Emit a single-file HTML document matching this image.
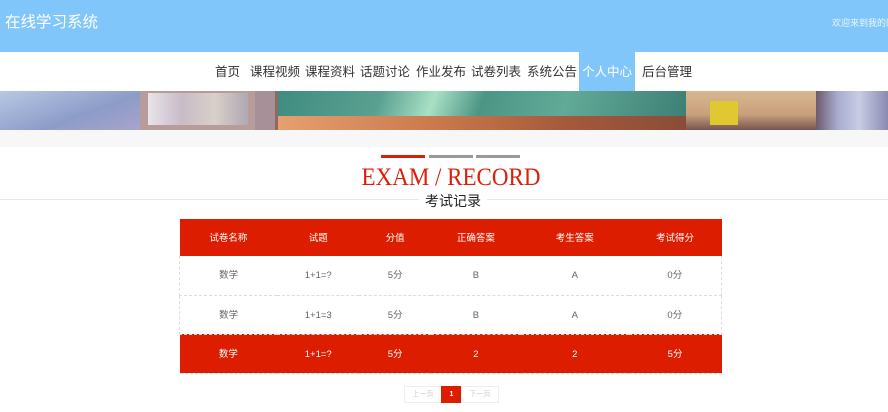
<!DOCTYPE html>
<html><head><meta charset="utf-8">
<style>
*{margin:0;padding:0;box-sizing:border-box}
body{width:888px;height:412px;overflow:hidden;background:#fff;font-family:"Liberation Sans","Noto Sans CJK SC",sans-serif;position:relative}
.hdr{position:absolute;left:0;top:0;width:888px;height:52px;background:#80c6fa}
.logo{position:absolute;left:5px;top:13px;color:#fff;font-size:15.5px;line-height:20px}
.wel{position:absolute;left:832px;top:16px;color:#eaf4ff;font-size:9px;white-space:nowrap}
.nav{position:absolute;left:0;top:52px;width:888px;height:39px;background:#fff}
.nav span{position:absolute;top:0;height:39px;line-height:40px;font-size:12.5px;color:#333;white-space:nowrap}
.nav .act{background:#80c6fa;color:#fff;width:56px;text-align:center}
.ban{position:absolute;left:0;top:91px;width:888px;height:39px;overflow:hidden;background:#8d6a5c}
.ban div{position:absolute}
.gray{position:absolute;left:0;top:130px;width:888px;height:17px;background:#f7f7f7}
.bar{position:absolute;top:155px;height:3px;width:44px}
.t1{position:absolute;left:7px;width:888px;top:163px;line-height:28px;text-align:center;font-family:"Liberation Serif",serif;font-size:23px;color:#d9200a;transform:scaleY(1.12)}
.line{position:absolute;left:0;top:199px;width:888px;height:1px;background:#e8e8e8}
.t2{position:absolute;left:419px;top:191px;padding:0 6px;background:#fff;font-size:14px;color:#222}
table{position:absolute;left:179px;top:219px;width:543px;border-collapse:collapse;font-size:9.5px;text-align:center}
td{height:39px;line-height:14px;vertical-align:middle;color:#666;border-bottom:1px dashed #ddd;padding:2px 0 0 0}
tr.h td{background:#dd1d00;color:#fff;height:37px;border:none}
tr.r td{background:#dd1d00;color:#fff;border-top:1px dashed #eaa}
tr.w td:first-child{border-left:1px dashed #ddd}
tr.w td:last-child{border-right:1px dashed #ddd}
.pg{position:absolute;top:386px;height:17px;font-size:7px;line-height:15px;text-align:center;border:1px solid #eee;color:#ccc}
</style></head><body>
<div class="hdr"><div class="logo">在线学习系统</div><div class="wel">欢迎来到我的网站</div></div>
<div class="nav">
<span style="left:215px">首页</span>
<span style="left:250px">课程视频</span>
<span style="left:305px">课程资料</span>
<span style="left:360px">话题讨论</span>
<span style="left:416px">作业发布</span>
<span style="left:471px">试卷列表</span>
<span style="left:527px">系统公告</span>
<span class="act" style="left:579px">个人中心</span>
<span style="left:642px">后台管理</span>
</div>
<div class="ban">
<div style="left:0;top:0;width:140px;height:39px;background:linear-gradient(160deg,#b8c8e4,#8c9cc8 60%,#a8a4cc)"></div>
<div style="left:140px;top:0;width:115px;height:39px;background:#b89c9c"></div>
<div style="left:148px;top:2px;width:100px;height:32px;background:linear-gradient(90deg,#e8e4e8,#c8bcc8,#d8d0c8,#b0a8b4)"></div>
<div style="left:255px;top:0;width:20px;height:39px;background:#a89098"></div>
<div style="left:278px;top:0;width:408px;height:25px;background:linear-gradient(110deg,#3f8c80 0%,#5aa090 25%,#a8e0c4 38%,#4c9484 50%,#62aa98 70%,#3d7f74 100%)"></div>
<div style="left:278px;top:25px;width:408px;height:14px;background:linear-gradient(90deg,#e6a070,#c8784c 40%,#a45a3c 70%,#8a4c38)"></div>
<div style="left:686px;top:0;width:130px;height:39px;background:linear-gradient(180deg,#d8b890,#c8a07c 60%,#7a5450)"></div>
<div style="left:710px;top:10px;width:28px;height:24px;background:#e0c830"></div>
<div style="left:816px;top:0;width:72px;height:39px;background:linear-gradient(90deg,#6c5a6c,#a8acd0 30%,#c8cce4 60%,#8a8ab0)"></div>
</div>
<div class="gray"></div>
<div class="bar" style="left:381px;background:#d9200a"></div>
<div class="bar" style="left:429px;background:#999"></div>
<div class="bar" style="left:476px;background:#999"></div>
<div class="t1">EXAM / RECORD</div>
<div class="line"></div>
<div class="t2">考试记录</div>
<table>
<colgroup><col style="width:98px"><col style="width:82px"><col style="width:72px"><col style="width:90px"><col style="width:108px"><col style="width:93px"></colgroup>
<tr class="h"><td>试卷名称</td><td>试题</td><td>分值</td><td>正确答案</td><td>考生答案</td><td>考试得分</td></tr>
<tr class="w"><td>数学</td><td>1+1=?</td><td>5分</td><td>B</td><td>A</td><td>0分</td></tr>
<tr class="w"><td>数学</td><td>1+1=3</td><td>5分</td><td>B</td><td>A</td><td>0分</td></tr>
<tr class="r"><td>数学</td><td>1+1=?</td><td>5分</td><td>2</td><td>2</td><td>5分</td></tr>
</table>
<div class="pg" style="left:404px;width:38px">上一页</div>
<div class="pg" style="left:441px;width:21px;background:#dd1d00;color:#fff;border-color:#dd1d00;font-weight:bold">1</div>
<div class="pg" style="left:461px;width:38px">下一页</div>
</body></html>
